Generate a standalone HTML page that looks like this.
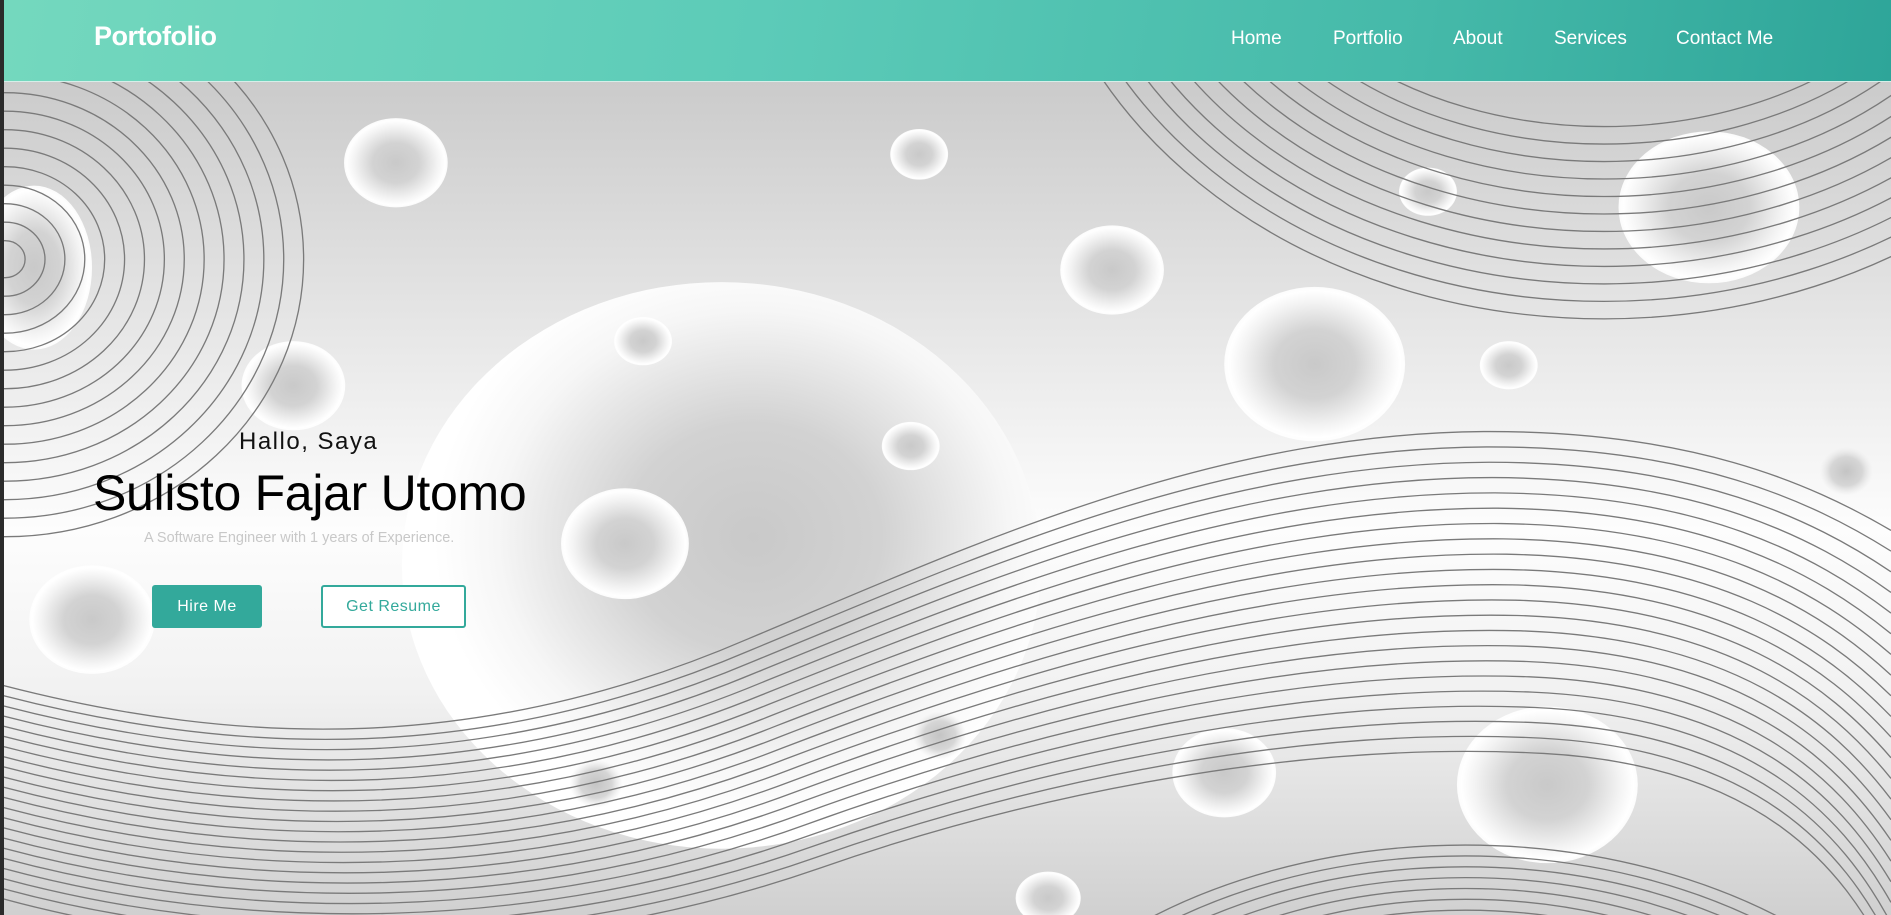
<!DOCTYPE html>
<html><head><meta charset="utf-8">
<style>
html,body{margin:0;padding:0;width:1891px;height:915px;overflow:hidden;font-family:"Liberation Sans",sans-serif;background:#2b2b2b}
#page{position:absolute;left:4px;top:0;width:1887px;height:915px;overflow:hidden}
#bg{position:absolute;left:0;top:0;width:1887px;height:915px}
nav{position:absolute;left:0;top:0;width:1887px;height:81px;background:linear-gradient(100deg,#74d8be 0%,#5ccbb8 40%,#45b9a9 75%,#2ea599 100%);border-bottom:1px solid #d6efe9}
.logo{position:absolute;left:90px;top:21px;color:#fff;font-weight:bold;font-size:27px;letter-spacing:-0.5px}
.menu a{position:absolute;top:28px;color:#fff;font-size:19px;text-decoration:none}
.t{position:absolute;white-space:nowrap}
.btn{position:absolute;top:585px;height:43px;box-sizing:border-box;border-radius:3px;font-size:16px;line-height:43px;text-align:center;letter-spacing:0.5px}
</style></head><body>
<div id="page">
<svg id="bg" viewBox="3 0 1565 759" preserveAspectRatio="none" xmlns="http://www.w3.org/2000/svg">
<defs>
<linearGradient id="g" x1="0" y1="0" x2="0" y2="1">
<stop offset="0.09" stop-color="#cbcbcb"/><stop offset="0.58" stop-color="#fdfdfd"/><stop offset="0.75" stop-color="#f2f2f2"/><stop offset="1" stop-color="#d0d0d0"/></linearGradient>
<radialGradient id="b"><stop offset="0" stop-color="#c9c9c9"/><stop offset="0.45" stop-color="#d3d3d3"/><stop offset="0.8" stop-color="#f3f3f3"/><stop offset="0.95" stop-color="#fff"/><stop offset="1" stop-color="#fff" stop-opacity="0.9"/></radialGradient>
<radialGradient id="s"><stop offset="0" stop-color="#c4c4c4"/><stop offset="0.6" stop-color="#d6d6d6"/><stop offset="1" stop-color="#e6e6e6" stop-opacity="0"/></radialGradient>
<radialGradient id="big" cx="0.55" cy="0.45"><stop offset="0" stop-color="#c9c9c9"/><stop offset="0.4" stop-color="#d2d2d2"/><stop offset="0.8" stop-color="#f6f6f6"/><stop offset="1" stop-color="#fff"/></radialGradient>
</defs>
<rect x="0" width="1568" height="759" fill="url(#g)"/>
<g id="bub"></g>
<g id="lines" fill="none" stroke="#7a7a7a" stroke-width="1.1"></g>
</svg>
<nav><div class="logo">Portofolio</div>
<div class="menu"><a style="left:1227px">Home</a><a style="left:1329px">Portfolio</a><a style="left:1449px">About</a><a style="left:1550px">Services</a><a style="left:1672px">Contact Me</a></div></nav>
<div class="t" style="left:235px;top:428px;font-size:24px;letter-spacing:1.5px;color:#111">Hallo, Saya</div>
<div class="t" style="left:89px;top:464px;font-size:50px;color:#000;letter-spacing:-0.3px">Sulisto Fajar Utomo</div>
<div class="t" style="left:140px;top:530px;font-size:14.5px;color:#c8c8c8">A Software Engineer with 1 years of Experience.</div>
<div class="btn" style="left:148px;width:110px;background:#33a99b;color:#fff">Hire Me</div>
<div class="btn" style="left:317px;width:145px;border:2px solid #33a99b;color:#33a99b;background:#fff;line-height:39px">Get Resume</div>
</div>
<script>
var NS="http://www.w3.org/2000/svg";
function el(p,t,a){var e=document.createElementNS(NS,t);for(var k in a)e.setAttribute(k,a[k]);p.appendChild(e);return e;}
var bub=document.getElementById('bub'),L=document.getElementById('lines');
el(bub,'ellipse',{cx:598,cy:469,rx:265,ry:235,fill:'url(#big)'});
[[328,135,43,37],[762,128,24,21],[1184,159,24,20],[1417,172,75,63],[922,224,43,37],[533,283,24,20],[1090,302,75,64],[1251,303,24,20],[243,320,43,37],[755,370,24,20],[518,451,53,46],[76,514,52,45],[1015,641,43,37],[1283,651,75,65],[869,745,27,22],[28,222,48,68]].forEach(function(b){el(bub,'ellipse',{cx:b[0],cy:b[1],rx:b[2],ry:b[3],fill:'url(#b)'});});
[[1531,391,22,20],[494,650,22,20],[779,610,22,20]].forEach(function(b){el(bub,'ellipse',{cx:b[0],cy:b[1],rx:b[2],ry:b[3],fill:'url(#s)'});});
for(var i=1;i<=15;i++){var r=i*16.5;el(L,'ellipse',{cx:4,cy:215,rx:r,ry:r*0.93});}
for(var i=0;i<12;i++){el(L,'ellipse',{cx:1330,cy:-120,rx:310+i*15,ry:225+i*14.5});}
for(var i=0;i<7;i++){var ry=245+i*9;el(L,'ellipse',{cx:1215,cy:1000,rx:ry*1.45,ry:ry});}
var tp=[[0,568],[200,620],[400,625],[620,530],[800,455],[1000,360],[1230,358],[1400,357],[1500,400],[1568,440]];
var bt=[[0,745],[200,800],[450,800],[680,720],[880,650],[1100,615],[1280,625],[1460,635],[1530,720],[1568,800]];
for(var i=0;i<22;i++){var t=i/21,p=[];for(var j=0;j<tp.length;j++){p.push([tp[j][0]+(bt[j][0]-tp[j][0])*t,tp[j][1]+(bt[j][1]-tp[j][1])*t]);}
var d='M'+p[0]+' C'+p[1]+' '+p[2]+' '+p[3]+' C'+p[4]+' '+p[5]+' '+p[6]+' C'+p[7]+' '+p[8]+' '+p[9];el(L,'path',{d:d});}
</script>
</body></html>
